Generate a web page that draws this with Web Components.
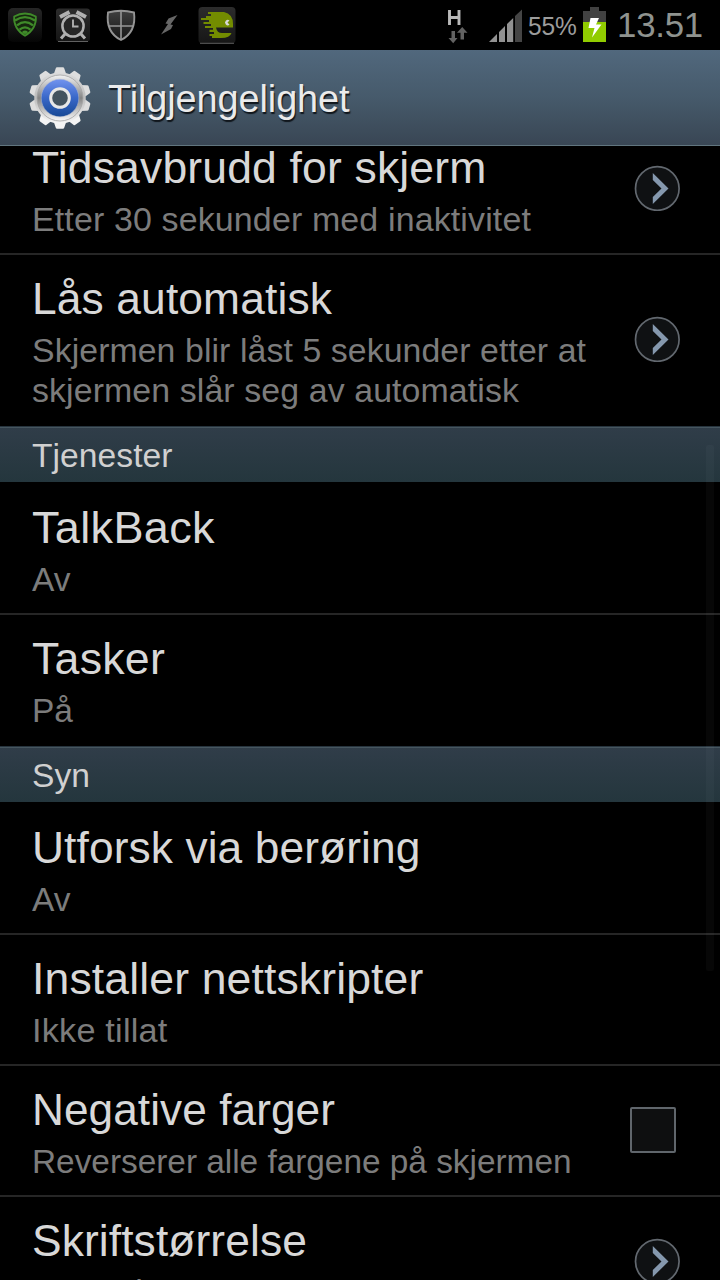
<!DOCTYPE html>
<html lang="no">
<head>
<meta charset="utf-8">
<title>Tilgjengelighet</title>
<style>
html,body{margin:0;background:#000;height:1280px;overflow:hidden}
body{font-family:"Liberation Sans",Arial,sans-serif;color:#d7d7d7}
</style>
</head>
<body>
<settings-screen></settings-screen>
<script>
function define(name, html, setup) {
  const t = document.createElement('template');
  t.innerHTML = html;
  customElements.define(name, class extends HTMLElement {
    connectedCallback() {
      if (this.shadowRoot) return;
      this.attachShadow({mode: 'open'}).append(t.content.cloneNode(true));
      if (setup) setup(this, this.shadowRoot);
    }
  });
}

// One line of text fitted to the width in "w": part by tracking, part by glyph width.
define('fit-text', `<style>
:host{display:block;white-space:nowrap}
span{display:inline-block;white-space:nowrap;transform-origin:0 50%}
</style><span></span>`, (el, root) => {
  const s = root.querySelector('span');
  const text = el.getAttribute('text');
  s.textContent = text;
  const w = parseFloat(el.getAttribute('w'));
  const natural = s.getBoundingClientRect().width;
  if (w && natural) {
    const scale = 1 + (w / natural - 1) * 0.6;
    s.style.letterSpacing = ((w / scale - natural) / text.length).toFixed(3) + 'px';
    s.style.transform = 'scaleX(' + scale.toFixed(4) + ')';
  }
});

define('status-bar', `<style>
:host{display:flex;height:50px;background:#000;align-items:flex-start;justify-content:space-between;position:relative;z-index:2}
svg{display:block}
.right{display:flex;height:50px}
.pct{font-size:25px;line-height:30px;color:#9c9c9c;padding-top:11px;width:55px}
.time{font-size:35.500px;line-height:42px;color:#8f938f;padding-top:4px;width:103px}
</style>
<svg width="250" height="50" viewBox="0 0 250 50">
  <defs>
    <linearGradient id="tile" x2="0" y2="1"><stop stop-color="#262626"/><stop offset=".5" stop-color="#161616"/><stop offset="1" stop-color="#050505"/></linearGradient>
    <linearGradient id="tile2" x2="0" y2="1"><stop stop-color="#2c2c2c"/><stop offset="1" stop-color="#161616"/></linearGradient>
    <linearGradient id="sh" x2="0" y2="1"><stop stop-color="#404040"/><stop offset="1" stop-color="#151515"/></linearGradient>
  </defs>
  <rect x="8" y="8" width="34" height="34" rx="5" fill="url(#tile)"/>
  <path d="M14.2 16.5Q25 10.500 35.800 16.500C36.500 25 32 31.500 25 35.800C18 31.500 13.500 25 14.200 16.500Z" fill="#16260f" stroke="#3f8a29" stroke-width="1.800"/>
  <path d="M15 20.500Q25 13.800 35 20.500M17 25.300Q25 19 33 25.300M19.500 29.600Q25 25 30.500 29.600" fill="none" stroke="#3f8a29" stroke-width="2.200"/>
  <ellipse cx="25" cy="32.200" rx="2.800" ry="1.800" fill="#3f8a29"/>
  <rect x="56" y="8.500" width="34" height="33" rx="3" fill="url(#tile2)"/>
  <path d="M58 41.500H88" stroke="#777" stroke-width=".8"/>
  <g fill="none" stroke="#b0b0b0">
    <path d="M60 17L69.500 12M86 17L76.500 12" stroke-width="3.800"/>
    <circle cx="73" cy="26" r="10.600" stroke-width="2.500" fill="#262626"/>
    <path d="M65 34L61 38.500M81 34L85 38.500" stroke-width="3"/>
    <path d="M73 19.500V26.500H78.500" stroke-width="1.900"/>
  </g>
  <path d="M108 12.500Q121 9 134 12.500C135.500 24 132 34.500 121 40C110 34.500 106.500 24 108 12.500Z" fill="url(#sh)" stroke="#949494" stroke-width="1.900"/>
  <path d="M121 11V39.500M108 26H134" stroke="#969696" stroke-width="1.600"/>
  <path d="M177.500 15L168.500 18.500L165.500 23.500L168 24L161 34.500L171 29L173 25L170.500 24.500Z" fill="#666"/>
  <rect x="198.500" y="7" width="37" height="36.500" rx="4" fill="url(#tile2)"/>
  <path d="M200 43.300H234" stroke="#676767" stroke-width=".9"/>
  <path d="M208 12H224Q233 14 233 24V27.500H216Q217 33 222 33H231.500Q230 38 221 38H212V36H209.500V34H214V32H209.500V29.700H213V28H205V26H211V24H203.500V22H209V20H201V18H206V16H211V14H208Z" fill="#738c00"/>
  <path d="M229.500 20.500A2.700 2.700 0 1 0 229.500 24.700L227.500 22.600Z" fill="#d8d8d8"/>
</svg>
<div class="right">
  <svg width="83" height="50" viewBox="445 0 83 50">
    <path d="M449.500 10V25M459 10V25M449.500 17.500H459" stroke="#b9b9b9" stroke-width="2.900" fill="none"/>
    <path d="M451.500 31H455V38H457.500L453.200 43.300L448.500 38H451.500ZM460.500 39.500H464V32.800H467.500L462.200 27L457 32.800H460.500Z" fill="#626262"/>
    <path d="M489 42L497 34V42ZM499 42V32L505 26V42ZM507 42V24L513.200 18V42Z" fill="#929292"/>
    <path d="M515 42V16L522 9.500V42Z" fill="#454545"/>
  </svg>
  <div class="pct"><fit-text text="55%" w="48.5"></fit-text></div>
  <svg width="34" height="50" viewBox="583 0 34 50">
    <path d="M590 7H599V11H606V22H583V11H590Z" fill="#414141"/><rect x="583" y="22" width="23" height="20" fill="#91cc00"/>
    <path d="M590.500 18H599L596 24.500H601.500L592 37.500L594.500 28H588.500Z" fill="#fff"/>
  </svg>
  <div class="time"><fit-text text="13.51" w="86"></fit-text></div>
</div>`);

define('gear-icon', `<style>:host{display:block;width:64px;height:66px}svg{display:block}</style>
<svg width="64" height="66" viewBox="-32 -34 64 66">
  <defs>
    <linearGradient id="m" x2="0" y2="1"><stop stop-color="#dcdcdc"/><stop offset=".5" stop-color="#bdbdbd"/><stop offset="1" stop-color="#f7f7f7"/></linearGradient>
    <linearGradient id="r" x2="0" y2="1"><stop stop-color="#f3f3f3"/><stop offset=".5" stop-color="#858585"/><stop offset="1" stop-color="#fafafa"/></linearGradient>
    <linearGradient id="b" x2="0" y2="1"><stop stop-color="#7293ef"/><stop offset=".5" stop-color="#3867c8"/><stop offset="1" stop-color="#184995"/></linearGradient>
  </defs>
  <g id="teeth"></g>
  <circle r="25.800" fill="url(#m)"/>
  <circle r="23" fill="url(#r)" stroke="#a2a2a2" stroke-width=".8"/>
  <circle r="18.800" fill="url(#b)" stroke="#b4bcd0" stroke-width=".5"/>
  <circle r="9.300" fill="#43535f" stroke="#e7e7e7" stroke-width="3"/>
</svg>`, (el, root) => {
  const g = root.querySelector('#teeth');
  const angles = [0, 35, 73, 107, 145, 180, 215, 253, 287, 325];
  for (const a of angles) {
    const p = document.createElementNS('http://www.w3.org/2000/svg', 'path');
    p.setAttribute('d', 'M-6.500 -23L-4.300 -29.500Q-4 -30.800 -2.800 -30.800H2.800Q4 -30.800 4.300 -29.500L6.500 -23Z');
    p.setAttribute('transform', 'rotate(' + a + ')');
    p.setAttribute('fill', a > 120 && a < 240 ? '#f4f4f4' : '#dedede');
    g.append(p);
  }
});

define('title-bar', `<style>
:host{display:flex;box-sizing:border-box;height:96px;padding:14px 0 0 28px;background:linear-gradient(#51687d,#465a6b 50%,#394654);border-bottom:1px solid #61757f;position:relative;z-index:2;color:#ebebeb;text-shadow:1px 2px 1px #10161c}
.t{font-size:38px;line-height:44px;padding:13px 0 0 16px}
</style><gear-icon></gear-icon><div class="t"><fit-text text="Tilgjengelighet" w="241.5"></fit-text></div>`);

define('chevron-button', `<style>:host{display:block;width:46px;height:46px;margin-bottom:2px}svg{display:block}</style>
<svg width="46" height="46"><circle cx="23.300" cy="23.500" r="21.800" fill="#0f1113" stroke="#62686f" stroke-width="1.700"/><path d="M18.800 8L34.500 23.500L18.800 39V32L27.500 23.500L18.800 15Z" fill="#8598ae"/></svg>`);

define('check-box', `<style>:host{display:block;box-sizing:border-box;width:46px;height:46px;border:2px solid #60666c;border-radius:2px;background:#0e0f10;margin:0 4px 2px 0}</style>`);

define('list-row', `<style>
:host{display:flex;box-sizing:border-box;height:131px;border-top:2px solid #262626;padding:0 40px 0 32px;justify-content:space-between;align-items:center}
:host([tall]){height:171px}
:host([first]){border-top-color:transparent}
.text{align-self:flex-start;padding-top:18px}
.h{font-size:44px;line-height:52px;color:#d8d8d8}
.s{font-size:33.500px;line-height:40px;color:#7c7c7c;padding-top:6px}
:host([last]) .s{padding-top:5px}
</style><div class="text"><div class="h"><slot name="title"></slot></div><div class="s"><slot></slot></div></div><slot name="control"></slot>`);

define('section-header', `<style>
:host{display:block;box-sizing:border-box;height:58px;border-top:2px solid #000;background:#000}
div{box-sizing:border-box;height:56px;border-top:1px solid #26333d;box-shadow:inset 0 1px #46565f;background:linear-gradient(#303d49,#24363d);font-size:33.500px;line-height:40px;padding:9px 32px 0;color:#d0d0d0}
</style><div><slot></slot></div>`);

define('scroll-thumb', `<style>:host{position:absolute;left:706px;top:445px;width:8px;height:526px;border-radius:2px;background:rgba(255,255,255,.028)}</style>`);

define('settings-screen', `<style>
:host{display:block;width:720px;height:1280px;background:#000;overflow:hidden;position:relative}
main{margin-top:-24px}
</style>
<status-bar></status-bar><title-bar></title-bar>
<main>
<list-row first><fit-text slot="title" text="Tidsavbrudd for skjerm" w="454.5"></fit-text><fit-text text="Etter 30 sekunder med inaktivitet" w="499"></fit-text><chevron-button slot="control"></chevron-button></list-row>
<list-row tall><fit-text slot="title" text="Lås automatisk" w="300"></fit-text><fit-text text="Skjermen blir låst 5 sekunder etter at" w="554"></fit-text><fit-text text="skjermen slår seg av automatisk" w="487"></fit-text><chevron-button slot="control"></chevron-button></list-row>
<section-header><fit-text text="Tjenester" w="140.5"></fit-text></section-header>
<list-row first><fit-text slot="title" text="TalkBack" w="183"></fit-text><fit-text text="Av" w="38.5"></fit-text></list-row>
<list-row><fit-text slot="title" text="Tasker" w="133"></fit-text><fit-text text="På" w="41"></fit-text></list-row>
<section-header><fit-text text="Syn" w="58"></fit-text></section-header>
<list-row first><fit-text slot="title" text="Utforsk via berøring" w="388.500"></fit-text><fit-text text="Av" w="38.5"></fit-text></list-row>
<list-row><fit-text slot="title" text="Installer nettskripter" w="391.5"></fit-text><fit-text text="Ikke tillat" w="135.5"></fit-text></list-row>
<list-row><fit-text slot="title" text="Negative farger" w="303"></fit-text><fit-text text="Reverserer alle fargene på skjermen" w="539.5"></fit-text><check-box slot="control"></check-box></list-row>
<list-row last><fit-text slot="title" text="Skriftstørrelse" w="275"></fit-text><fit-text text="Normal" w="111"></fit-text><chevron-button slot="control"></chevron-button></list-row>
</main>
<scroll-thumb></scroll-thumb>`);
</script>
</body>
</html>
